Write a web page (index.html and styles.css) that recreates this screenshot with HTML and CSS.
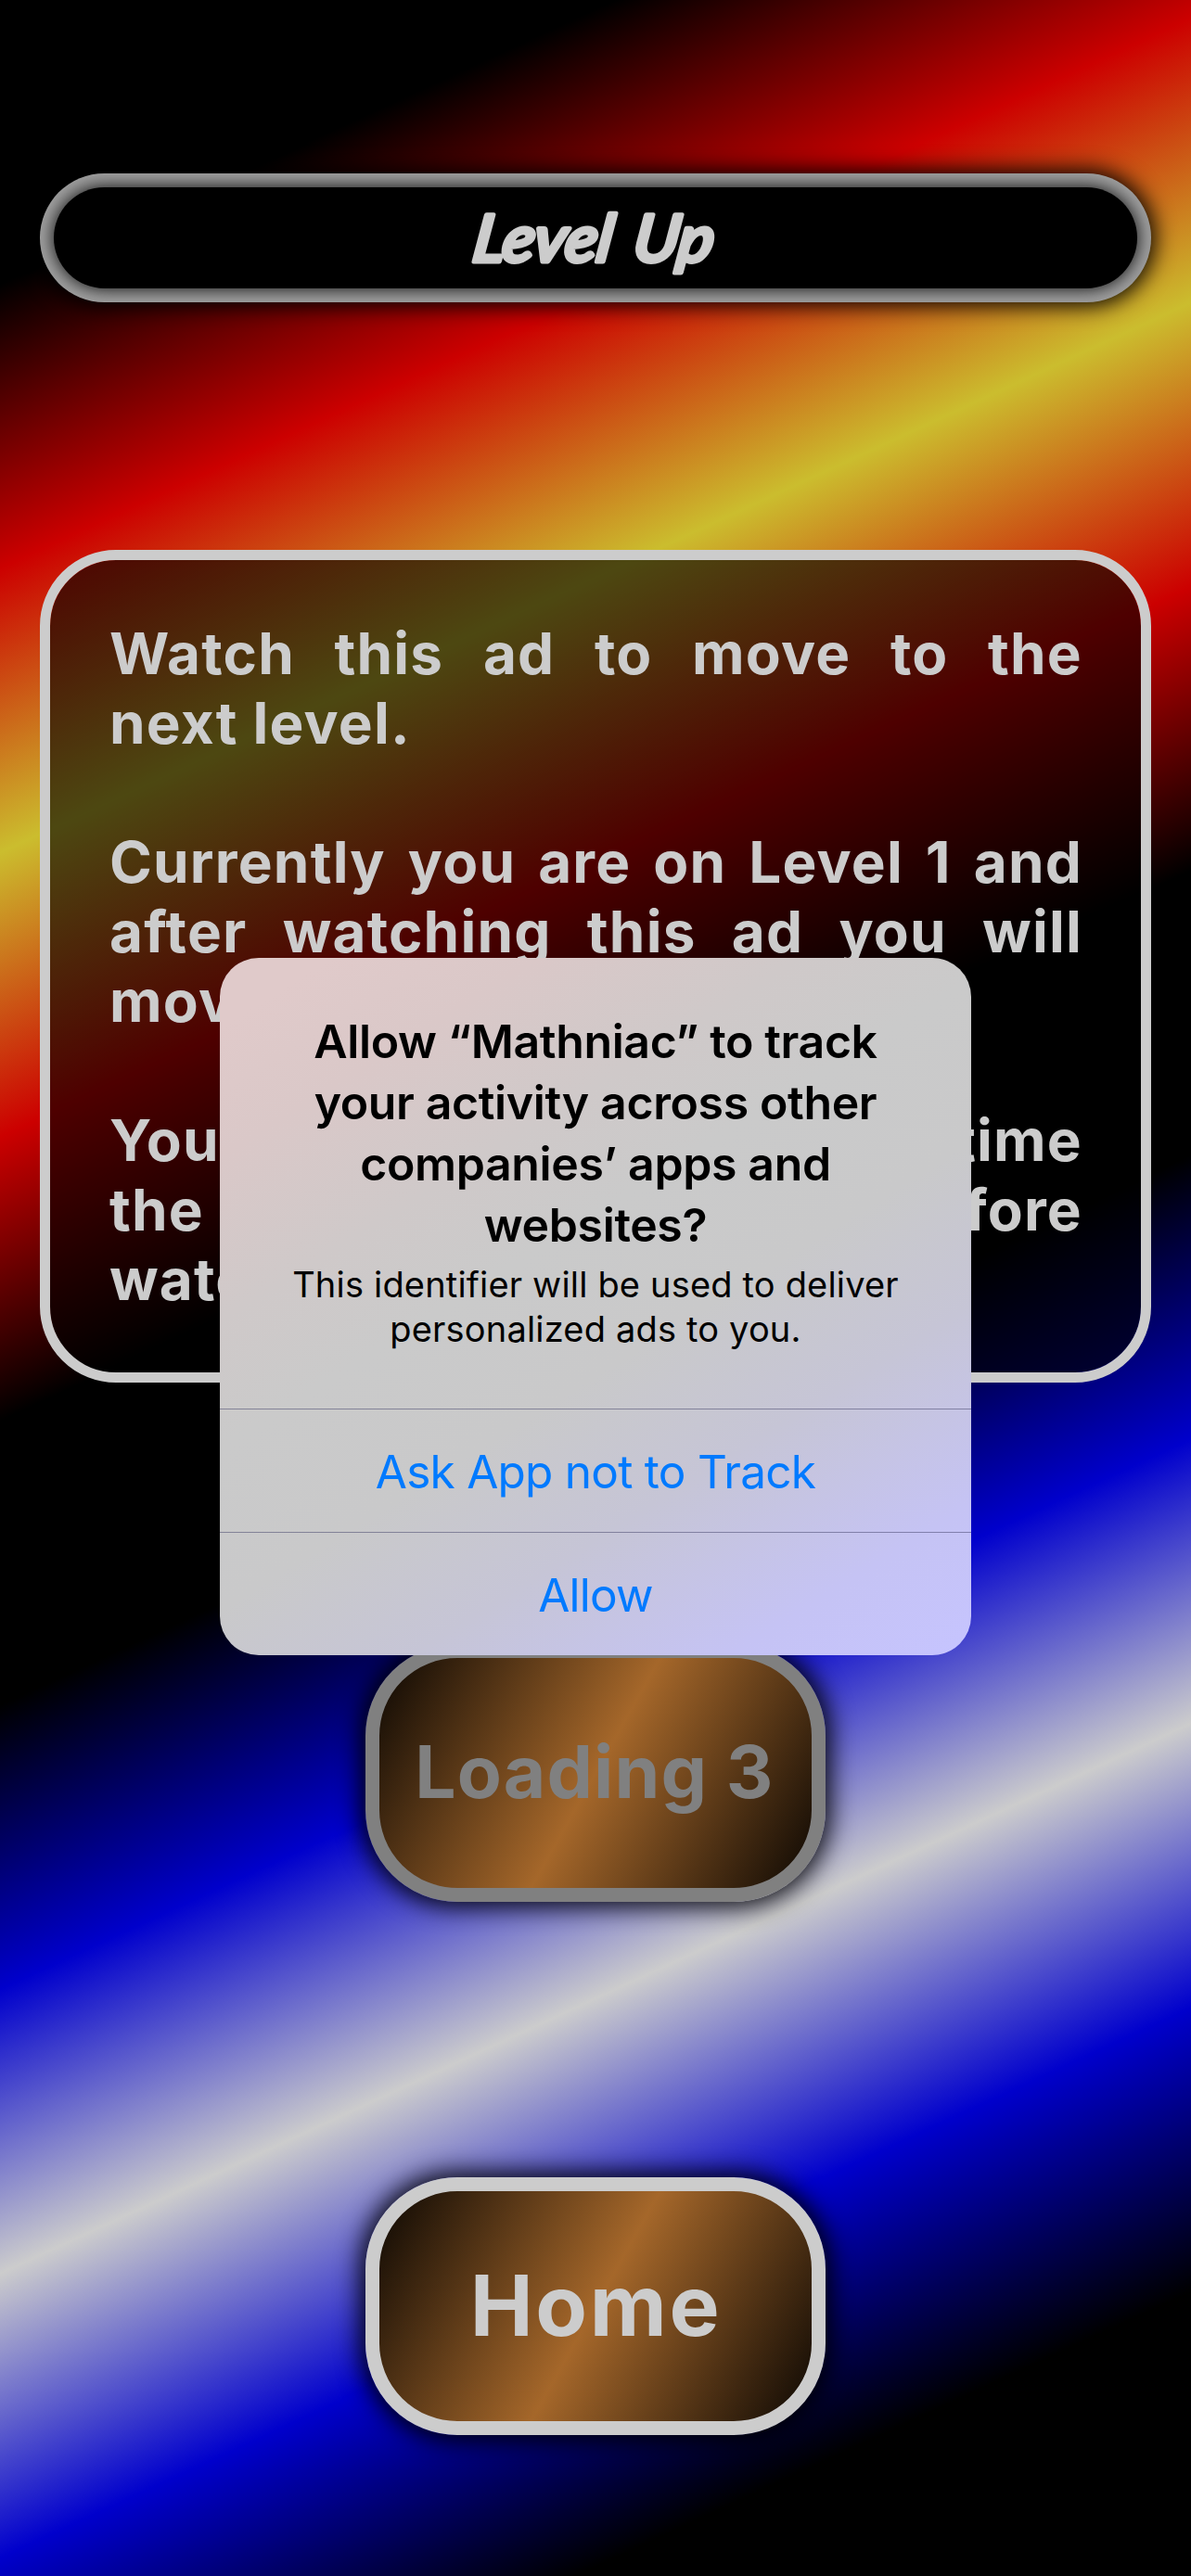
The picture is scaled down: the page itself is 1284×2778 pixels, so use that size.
FILE: index.html
```html
<!DOCTYPE html>
<html lang="en">
<head>
<meta charset="utf-8">
<title>Level Up</title>
<link rel="stylesheet" href="styles.css">
</head>
<body>
<main class="screen">
  <header class="banner">
    <h1 class="banner-face">
      <svg class="banner-title" width="300" height="109" viewBox="0 0 300 109">
        <text x="15" y="80" textLength="259" lengthAdjust="spacingAndGlyphs" transform="translate(12 0) skewX(-8)">Level Up</text>
      </svg>
    </h1>
  </header>
  <section class="card">
    <p class="line spread">Watch this ad to move to the</p>
    <p class="line">next level.</p>
    <p class="line spread gap">Currently you are on Level 1 and</p>
    <p class="line spread">after watching this ad you will</p>
    <p class="line">move</p>
    <p class="line spread gap">You time</p>
    <p class="line spread">the before</p>
    <p class="line">watch</p>
  </section>
  <button class="action loading">Loading 3</button>
  <button class="action home">Home</button>
</main>
<div class="overlay">
  <section class="alert" role="dialog">
    <div class="alert-body">
      <h2 class="alert-title">Allow “Mathniac” to track<br>your activity across other<br>companies’ apps and<br>websites?</h2>
      <p class="alert-message">This identifier will be used to deliver<br>personalized ads to you.</p>
    </div>
    <button class="alert-button">Ask App not to Track</button>
    <button class="alert-button">Allow</button>
  </section>
</div>
</body>
</html>
```
FILE: styles.css
```css
* { box-sizing: border-box; margin: 0; padding: 0; }

body {
  width: 1284px;
  height: 2778px;
  overflow: hidden;
  position: relative;
  font-family: Inter, "Liberation Sans", sans-serif;
  background: linear-gradient(155.2deg,
    #000 9.09%, #c00 18.18%, #cbbd2e 27.27%, #c00 36.36%, #000 45.45%,
    #000 54.55%, #00c 63.64%, #ccc 72.73%, #00c 81.82%, #000 90.91%);
}

.screen {
  display: flex;
  flex-direction: column;
  align-items: center;
  padding: 187px 43px 0;
}

/* Pill-shaped title bar with a bevelled rim */
.banner {
  width: 100%;
  height: 139px;
  padding: 15px;
  border-radius: 70px;
  background: #a2a2a2;
  overflow: hidden;
  box-shadow: 0 0 22px 5px rgba(0, 0, 0, .9);
}

.banner-face {
  height: 109px;
  display: flex;
  align-items: center;
  justify-content: center;
  border-radius: 55px;
  background: #000;
  box-shadow: 0 0 20px #000;
}

.banner-title {
  font: italic 500 70px Lato, sans-serif;
  word-spacing: 6px;
  fill: #ccc;
  stroke: #ccc;
  stroke-width: 5px;
  stroke-linejoin: round;
}

.card {
  width: 100%;
  height: 898px;
  margin-top: 267px;
  padding: 63px 63px 0 64px;
  border: 11px solid #ccc;
  border-radius: 82px;
  background: rgba(0, 0, 0, .62);
  background-clip: padding-box;
}

.line {
  font-size: 62px;
  font-weight: 700;
  line-height: 75px;
  letter-spacing: 1.2px;
  white-space: nowrap;
  color: #ccc;
}

.spread { text-align-last: justify; white-space: normal; }
.gap { margin-top: 75px; }

.action {
  width: 496px;
  height: 278px;
  border: 15px solid #ccc;
  border-radius: 99px;
  background: linear-gradient(119.3deg, #000, #a5672a 50%, #000) border-box;
  box-shadow: 0 0 26px 6px rgba(0, 0, 0, .9);
  font-family: inherit;
  font-weight: 700;
  color: #ccc;
}

.loading {
  margin-top: 282px;
  padding: 0 2px 3px 0;
  border-color: #808080;
  color: #808080;
  font-size: 78.5px;
  letter-spacing: 1.1px;
}

.home {
  margin-top: 297px;
  padding: 0 0 2px 1px;
  font-size: 91px;
  letter-spacing: 2.6px;
}

.overlay {
  position: absolute;
  inset: 0;
  padding-top: 1033px;
  display: flex;
  justify-content: center;
  align-items: flex-start;
}

.alert {
  width: 810px;
  height: 752px;
  border-radius: 42px;
  overflow: hidden;
  background: linear-gradient(148deg, #e0caca 6%, #dac8c8 17%, #cfc9c9 31%, #cacaca 42%, #c9c9ca 56%, #c6c5d6 70%, #c5c3f4 87%, #c6c4ff);
}

.alert-body { height: 486px; padding-top: 57px; text-align: center; color: #000; }
.alert-title { font-size: 50px; font-weight: 600; line-height: 66px; letter-spacing: -.38px; }
.alert-message { margin-top: 7px; font-size: 38px; line-height: 48px; letter-spacing: .18px; }

.alert-button {
  display: block;
  width: 100%;
  height: 133px;
  padding-top: 2px;
  border: 0;
  border-top: 1px solid rgba(60, 60, 100, .5);
  background: none;
  font-family: inherit;
  font-size: 49.5px;
  letter-spacing: -.75px;
  color: #007aff;
}
```
